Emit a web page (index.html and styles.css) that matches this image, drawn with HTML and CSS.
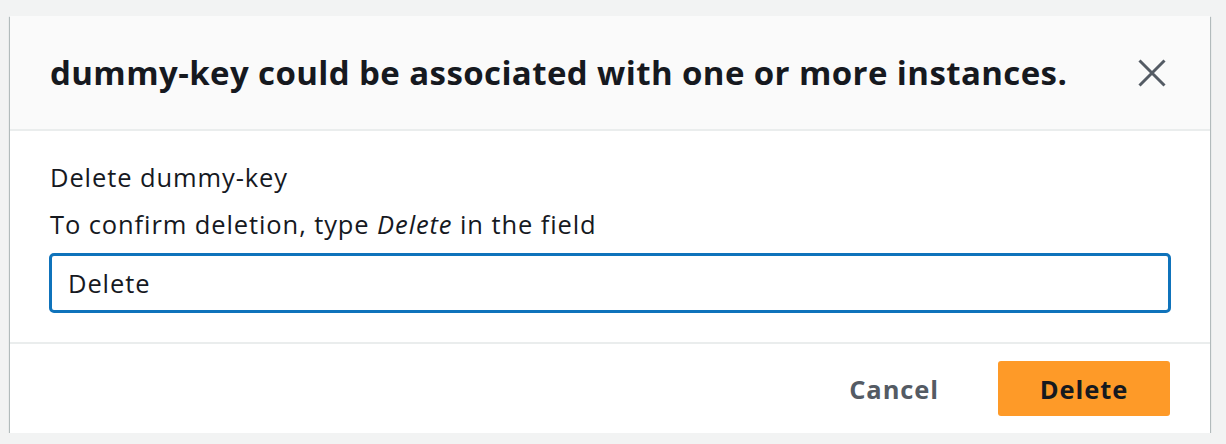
FILE: index.html
```html
<!DOCTYPE html>
<html>
<head>
<meta charset="utf-8">
<link rel="stylesheet" href="styles.css">
</head>
<body>
<div class="modal">
  <div class="header">
    <h2 class="title">dummy-key could be associated with one or more instances.</h2>
    <button class="close" aria-label="Close">
      <svg width="28" height="28" viewBox="0 0 28 28"><path d="M1.5 1.5 L26.5 26.5 M26.5 1.5 L1.5 26.5" stroke="#545b64" stroke-width="3" fill="none"/></svg>
    </button>
  </div>
  <div class="body">
    <p class="line">Delete dummy-key</p>
    <p class="line">To confirm deletion, type <em>Delete</em> in the field</p>
    <input class="field" type="text" value="Delete">
  </div>
  <div class="footer">
    <button class="btn-cancel">Cancel</button>
    <button class="btn-delete">Delete</button>
  </div>
</div>
</body>
</html>
```
FILE: styles.css
```css
html, body {
  margin: 0;
  padding: 0;
  background: #f2f3f3;
}
body {
  padding: 16px 16px 0 10px;
  font-family: "Open Sans", "Noto Sans", sans-serif;
  color: #16191f;
}
.modal {
  width: 1200px;
  background: #ffffff;
  box-shadow: 0 1px 1px 0 rgba(0, 28, 36, 0.45), 1px 1px 1px 0 rgba(0, 28, 36, 0.2), -1px 1px 1px 0 rgba(0, 28, 36, 0.2);
}
.header {
  height: 115px;
  box-sizing: border-box;
  background: #fafafa;
  border-bottom: 2px solid #eaeded;
  display: flex;
  align-items: center;
  justify-content: space-between;
  padding: 0 44px 0 40px;
}
.title {
  margin: 0;
  font-size: 33px;
  font-weight: 700;
  letter-spacing: 0.4px;
  color: #16191f;
}
.close {
  background: none;
  border: 0;
  padding: 0;
  width: 28px;
  height: 28px;
  display: flex;
}
.body {
  padding: 28px 38px 29px 40px;
  border-bottom: 2px solid #eaeded;
}
.line {
  margin: 0 0 10px;
  font-size: 25.5px;
  letter-spacing: 0.9px;
  line-height: 37px;
}
.line em {
  font-style: italic;
}
.field {
  display: block;
  width: 100%;
  box-sizing: border-box;
  height: 60px;
  border: 3px solid #0f73bb;
  border-radius: 5px;
  padding: 0 16px;
  font-family: inherit;
  font-size: 25.5px;
  letter-spacing: 0.9px;
  color: #16191f;
  outline: none;
  margin-left: -1px;
}
.footer {
  display: flex;
  justify-content: flex-end;
  align-items: center;
  gap: 42px;
  padding: 17px 40px;
}
.btn-cancel {
  background: none;
  border: 0;
  font-family: inherit;
  font-size: 25.5px;
  letter-spacing: 0.9px;
  font-weight: 700;
  color: #545b64;
  padding: 0 17px;
  height: 55px;
}
.btn-delete {
  background: #fe9a28;
  border: 0;
  border-radius: 3px;
  width: 172px;
  height: 55px;
  font-family: inherit;
  font-size: 25.5px;
  letter-spacing: 0.9px;
  font-weight: 700;
  color: #16191f;
}
```
